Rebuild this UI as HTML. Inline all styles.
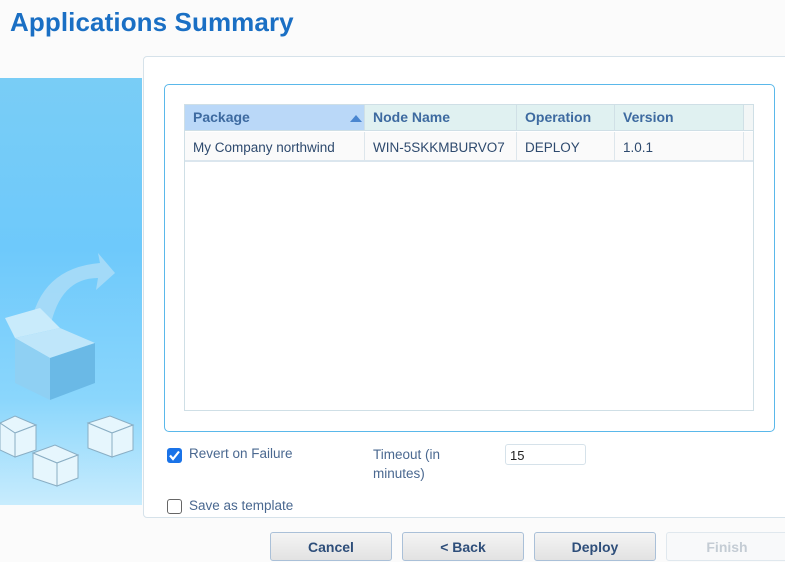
<!DOCTYPE html>
<html><head><style>
body{margin:0;width:785px;height:562px;background:#fbfbfb;font-family:"Liberation Sans",sans-serif;position:relative;overflow:hidden}
.abs{position:absolute}
h1{position:absolute;left:10px;top:7px;margin:0;font-size:26px;color:#1a6fc4;font-weight:bold;letter-spacing:0.1px}
.panel{left:143px;top:56px;width:660px;height:460px;background:#fff;border:1px solid #d6e2ea;border-radius:4px}
.img{left:0;top:78px;width:142px;height:427px;background:linear-gradient(180deg,#79cdf6 0%,#6ec9fb 40%,#8ad6fc 75%,#c8ecfd 100%)}
.box{left:164px;top:84px;width:609px;height:346px;border:1px solid #5ab8ea;border-radius:5px;background:#fff}
.grid{left:184px;top:104px;width:568px;height:305px;border:1px solid #cfdfe6;background:#fff}
.hd{position:absolute;top:0;height:26px;line-height:24px;font-size:14px;font-weight:bold;color:#3d6aa0;background:#e0f1f1;border-right:1px solid #d0e0e6;padding-left:8px;box-sizing:border-box;border-bottom:1px solid #cfdfe6}
.cell{position:absolute;top:27px;height:30px;line-height:31px;font-size:13.5px;color:#2e4a6e;background:#fafafa;border-right:1px solid #dde6ec;padding-left:8px;box-sizing:border-box;border-bottom:2px solid #dbe6ee}
.lbl{font-size:13.5px;color:#4a6890}
.cb{width:15px;height:15px;border-radius:3px;box-sizing:border-box}
.btn{top:532px;height:29px;width:122px;border:1px solid #aac0d8;border-radius:3px;background:linear-gradient(#f4f4f4,#e2e2e2);text-align:center;line-height:29px;font-size:14px;font-weight:bold;color:#2e4e7a;box-sizing:border-box}
</style></head><body>
<h1>Applications Summary</h1>
<div class="abs panel"></div>
<div class="abs img">
<svg width="142" height="427" viewBox="0 0 142 427">
<path d="M30 250 Q40 190 100 185 L98 175 L115 195 L96 212 L98 200 Q60 200 50 250 Z" fill="#a9dcf7" opacity=".9"/>
<polygon points="15,260 60,250 95,265 50,280" fill="#bfe6fa"/>
<polygon points="15,260 50,280 50,322 15,305" fill="#8fd0f3"/>
<polygon points="50,280 95,265 95,305 50,322" fill="#6ab9e6"/>
<polygon points="5,240 40,230 60,250 15,260" fill="#c9ebfb"/>
<g fill="#e6f6fd" stroke="#8aaec4" stroke-width="1">
<polygon points="88,345 110,338 133,347 112,355"/><polygon points="88,345 112,355 112,379 88,370"/><polygon points="112,355 133,347 133,372 112,379"/>
<polygon points="33,375 55,367 78,377 57,385"/><polygon points="33,375 57,385 57,408 33,400"/><polygon points="57,385 78,377 78,400 57,408"/>
<polygon points="0,345 15,338 36,347 15,355"/><polygon points="0,345 15,355 15,379 0,372"/><polygon points="15,355 36,347 36,372 15,379"/>
</g></svg></div>
<div class="abs box"></div>
<div class="abs grid">
<div class="hd" style="left:0;width:180px;background:#bad8f8">Package<span style="position:absolute;right:2px;top:10px;border:6px solid transparent;border-bottom:7px solid #4a86d0;border-top:0"></span></div>
<div class="hd" style="left:180px;width:152px">Node Name</div>
<div class="hd" style="left:332px;width:98px">Operation</div>
<div class="hd" style="left:430px;width:129px">Version</div>
<div class="hd" style="left:559px;width:9px;background:#f2f6f6;border-right:0"></div>
<div class="cell" style="left:0;width:180px">My Company northwind</div>
<div class="cell" style="left:180px;width:152px">WIN-5SKKMBURVO7</div>
<div class="cell" style="left:332px;width:98px">DEPLOY</div>
<div class="cell" style="left:430px;width:129px">1.0.1</div>
<div class="cell" style="left:559px;width:9px;border-right:0"></div>
</div>
<div class="abs cb" style="left:167px;top:448px;background:#1a73e8;"><svg width="15" height="15"><path d="M3 7.5 L6 11 L12 3.5" stroke="#fff" stroke-width="2.2" fill="none"/></svg></div>
<div class="abs lbl" style="left:189px;top:446px">Revert on Failure</div>
<div class="abs lbl" style="left:373px;top:445px;line-height:19px">Timeout (in<br>minutes)</div>
<div class="abs" style="left:505px;top:444px;width:81px;height:21px;border:1px solid #d6e2ea;border-radius:3px;background:#fff;font-size:13px;line-height:21px;padding-left:4px;box-sizing:border-box;color:#222">15</div>
<div class="abs cb" style="left:167px;top:499px;border:1px solid #666;background:#fff"></div>
<div class="abs lbl" style="left:189px;top:498px">Save as template</div>
<div class="abs btn" style="left:270px">Cancel</div>
<div class="abs btn" style="left:402px">&lt; Back</div>
<div class="abs btn" style="left:534px">Deploy</div>
<div class="abs btn" style="left:666px;color:#c4ccd4;border-color:#e0e8ee;background:#f8f9fa">Finish</div>
</body></html>
